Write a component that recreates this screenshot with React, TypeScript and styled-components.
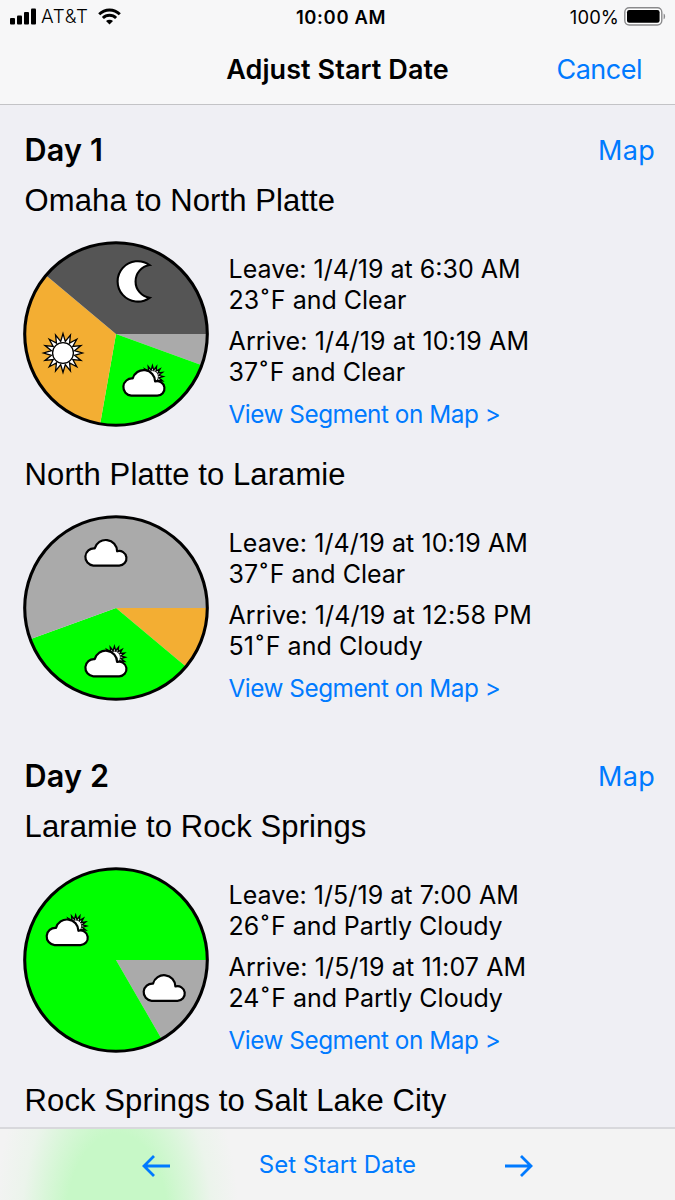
import React from "react";
import styled, { createGlobalStyle } from "styled-components";

const SANS = `Inter, "Liberation Sans", sans-serif`;
const BLUE = "#007aff";

const GlobalStyle = createGlobalStyle`
  *, *::before, *::after { box-sizing: border-box; }
  body { margin: 0; background: #efeff4; font-family: ${SANS}; color: #000; }
  h1, h2, h3, p { margin: 0; font-weight: 400; }
  button { font: inherit; border: 0; background: none; padding: 0; color: ${BLUE}; }
  svg { display: block; flex: none; }
`;

const Screen = styled.div`
  display: flex;
  flex-direction: column;
  width: 675px;
  height: 1200px;
  overflow: hidden;
  background: #efeff4;
`;

const Header = styled.header`
  flex: none;
  height: 105px;
  background: #f7f7f8;
  border-bottom: 1px solid #c3c3c6;
`;

const StatusBar = styled.div`
  display: grid;
  grid-template-columns: 1fr auto 1fr;
  align-items: center;
  height: 33px;
  padding: 0 9px 0 10px;
  font-size: 18.4px;
`;

const StatusGroup = styled.div<{ $end?: boolean }>`
  display: flex;
  align-items: center;
  justify-content: ${(p) => (p.$end ? "flex-end" : "flex-start")};
`;

const Carrier = styled.span`
  margin: 0 9px 0 5px;
  font-weight: 300;
  font-size: 18.8px;
  letter-spacing: 0.65px;
`;

const Clock = styled.span`
  font-weight: 600;
  letter-spacing: 0.65px;
  padding-left: 6px;
`;

const Charge = styled.span`
  margin-right: 5px;
  letter-spacing: 0.1px;
`;

const NavBar = styled.div`
  display: grid;
  grid-template-columns: 1fr auto 1fr;
  align-items: center;
  height: 72px;
  padding-right: 33px;
`;

const NavTitle = styled.h1`
  grid-column: 2;
  font-size: 27px;
  font-weight: 600;
  letter-spacing: 0.08px;
  padding-left: 33px;
`;

const NavAction = styled.button`
  justify-self: end;
  font-size: 27px;
  letter-spacing: -0.5px;
`;

const Itinerary = styled.main`
  flex: 1;
  min-height: 0;
  overflow: hidden;
  padding: 25px 20px 0 24.6px;
`;

const Day = styled.section`
  height: 626px;
`;

const DayHeader = styled.div`
  display: flex;
  align-items: center;
  justify-content: space-between;
  height: 39px;
  margin-bottom: 1px;
`;

const DayTitle = styled.h2`
  font-size: 30.6px;
  font-weight: 600;
  letter-spacing: 0.15px;
`;

const MapLink = styled.button`
  padding-top: 2px;
  font-size: 27px;
  letter-spacing: 0.3px;
`;

const Segment = styled.article`
  height: 274px;
`;

const Route = styled.h3`
  height: 60px;
  line-height: 62px;
  font-family: "Liberation Sans", Arial, sans-serif;
  font-size: 31px;
  letter-spacing: 0.1px;
`;

const SegmentBody = styled.div`
  display: flex;
  padding-top: 11px;
  margin-left: -1.9px;
`;

const Details = styled.div`
  display: flex;
  flex-direction: column;
  align-items: flex-start;
  padding: 13px 0 0 19.8px;
  font-size: 25px;
  line-height: 31px;
  white-space: nowrap;
`;

const Stop = styled.div`
  margin-bottom: 10px;
`;

const StopLine = styled.p<{ $track?: number }>`
  letter-spacing: ${(p) => p.$track ?? 0}px;
`;

const Degree = styled.span`
  margin: 0 2.2px 0 2px;
`;

const SegmentLink = styled.button`
  margin-top: 1px;
  font-size: 24.3px;
  line-height: 31px;
  letter-spacing: -0.46px;
`;

const Toolbar = styled.footer`
  flex: none;
  display: flex;
  align-items: center;
  height: 73px;
  padding: 3px 141px 0;
  justify-content: space-between;
  border-top: 2px solid #d8d8dc;
  background: radial-gradient(
      ellipse 122px 215px at 117px 95px,
      #c7f8c7 0%,
      #c7f8c7 42%,
      rgba(210, 247, 210, 0.8) 60%,
      rgba(228, 245, 228, 0.5) 78%,
      rgba(243, 243, 243, 0) 100%
    ),
    #f3f3f3;
`;

const ToolbarLabel = styled.button`
  margin-top: -4px;
  font-size: 24px;
`;

type WeatherKind = "clear" | "night" | "cloudy" | "partly";

const FILL: Record<WeatherKind, string> = {
  clear: "#f3ae33",
  night: "#555555",
  cloudy: "#aaaaaa",
  partly: "#00ff00",
};

interface Wedge {
  kind: WeatherKind;
  from: number;
  to: number;
  icon?: [number, number];
}

function star(cx: number, cy: number, rays: number, outer: number, inner: number) {
  const pts: string[] = [];
  for (let i = 0; i < rays * 2; i++) {
    const r = i % 2 ? inner : outer;
    const a = (Math.PI * i) / rays - Math.PI / 2;
    pts.push(`${(cx + r * Math.cos(a)).toFixed(2)},${(cy + r * Math.sin(a)).toFixed(2)}`);
  }
  return pts.join(" ");
}

const Sun = () => (
  <g fill="#fff" stroke="#000" strokeWidth="1.3">
    <polygon points={star(0, 0, 16, 19.4, 11.8)} strokeMiterlimit="8" />
    <circle r="10.4" />
  </g>
);

const Moon = () => (
  <path
    d="M13.2 -16.4A20.2 20.2 0 1 0 13.2 16.4A16.6 16.6 0 0 1 13.2 -16.4Z"
    fill="#fff"
    stroke="#000"
    strokeWidth="2.1"
    strokeMiterlimit="6"
  />
);

const Cloud = () => (
  <path
    d="M8.9 25.7A8.6 8.6 0 1 1 10.3 8.5A11.4 11.4 0 0 1 32.7 11.4A7.3 7.3 0 1 1 34.8 25.7Z"
    fill="#fff"
    stroke="#000"
    strokeWidth="2.2"
    strokeLinejoin="round"
  />
);

const PartlyCloudy = () => (
  <>
    <polygon
      points={star(30, 6.6, 16, 10.8, 6.6)}
      fill="#fff"
      stroke="#000"
      strokeWidth="1.4"
      strokeMiterlimit="6"
    />
    <circle cx="30" cy="6.6" r="6" fill="#fff" stroke="#000" strokeWidth="0.8" />
    <Cloud />
  </>
);

const ICON: Record<WeatherKind, React.FC> = {
  clear: Sun,
  night: Moon,
  cloudy: Cloud,
  partly: PartlyCloudy,
};

function wedgePath(from: number, to: number) {
  const p = (deg: number) => {
    const a = (deg * Math.PI) / 180;
    return `${(93 + 91.5 * Math.cos(a)).toFixed(2)} ${(93 + 91.5 * Math.sin(a)).toFixed(2)}`;
  };
  return `M93 93L${p(from)}A91.5 91.5 0 ${to - from > 180 ? 1 : 0} 1 ${p(to)}Z`;
}

function WeatherPie({ wedges }: { wedges: Wedge[] }) {
  return (
    <svg width="186" height="186" viewBox="0 0 186 186">
      {wedges.map((w) => (
        <path key={w.from} d={wedgePath(w.from, w.to)} fill={FILL[w.kind]} />
      ))}
      <circle cx="93" cy="93" r="91.3" fill="none" stroke="#000" strokeWidth="3.1" />
      {wedges.map((w) => {
        if (!w.icon) return null;
        const Icon = ICON[w.kind];
        return (
          <g key={w.from} transform={`translate(${w.icon[0]} ${w.icon[1]})`}>
            <Icon />
          </g>
        );
      })}
    </svg>
  );
}

interface Line {
  text: string;
  track?: number;
}

interface SegmentData {
  route: string;
  wedges: Wedge[];
  leave: Line[];
  arrive: Line[];
}

const DAYS: { title: string; segments: SegmentData[] }[] = [
  {
    title: "Day 1",
    segments: [
      {
        route: "Omaha to North Platte",
        wedges: [
          { kind: "cloudy", from: 0, to: 20 },
          { kind: "partly", from: 20, to: 100, icon: [99.4, 129] },
          { kind: "clear", from: 100, to: 220, icon: [40, 112] },
          { kind: "night", from: 220, to: 360, icon: [113.4, 40.4] },
        ],
        leave: [{ text: "Leave: 1/4/19 at 6:30 AM" }, { text: "23˚F and Clear" }],
        arrive: [{ text: "Arrive: 1/4/19 at 10:19 AM", track: 0.13 }, { text: "37˚F and Clear" }],
      },
      {
        route: "North Platte to Laramie",
        wedges: [
          { kind: "clear", from: 0, to: 40 },
          { kind: "partly", from: 40, to: 160, icon: [61.4, 135.6] },
          { kind: "cloudy", from: 160, to: 360, icon: [61.4, 24.9] },
        ],
        leave: [{ text: "Leave: 1/4/19 at 10:19 AM", track: 0.1 }, { text: "37˚F and Clear" }],
        arrive: [
          { text: "Arrive: 1/4/19 at 12:58 PM", track: 0.12 },
          { text: "51˚F and Cloudy", track: 0.06 },
        ],
      },
    ],
  },
  {
    title: "Day 2",
    segments: [
      {
        route: "Laramie to Rock Springs",
        wedges: [
          { kind: "cloudy", from: 0, to: 60, icon: [119.7, 108.1] },
          { kind: "partly", from: 60, to: 360, icon: [22.7, 52.4] },
        ],
        leave: [{ text: "Leave: 1/5/19 at 7:00 AM", track: 0.05 }, { text: "26˚F and Partly Cloudy" }],
        arrive: [{ text: "Arrive: 1/5/19 at 11:07 AM", track: 0.13 }, { text: "24˚F and Partly Cloudy" }],
      },
      { route: "Rock Springs to Salt Lake City", wedges: [], leave: [], arrive: [] },
    ],
  },
];

const SignalIcon = () => (
  <svg width="26" height="17" viewBox="0 0 26 17">
    <rect x="0" y="10" width="5" height="6.6" rx="1" />
    <rect x="7" y="7.4" width="5" height="9.2" rx="1" />
    <rect x="14" y="4" width="5" height="12.6" rx="1" />
    <rect x="21" y="0.5" width="5" height="16.1" rx="1" />
  </svg>
);

const WifiIcon = () => (
  <svg width="23" height="17" viewBox="0 0 23 17" fill="none" stroke="#000" strokeWidth="2.9">
    <path d="M1.2 6.3A14.6 14.6 0 0 1 21.8 6.3" />
    <path d="M4.9 10A9.3 9.3 0 0 1 18.1 10" />
    <path d="M11.5 16.6L8 13.1A5 5 0 0 1 15 13.1Z" fill="#000" stroke="none" />
  </svg>
);

const BatteryIcon = () => (
  <svg width="42" height="19" viewBox="0 0 42 19">
    <rect x="0.8" y="0.8" width="37" height="17.2" rx="4.4" fill="#fff" stroke="#8a8a8c" strokeWidth="1.4" />
    <rect x="3" y="3" width="32.6" height="12.8" rx="2.2" />
    <path d="M39.6 6.5C41.6 7.2 41.6 11.6 39.6 12.3Z" fill="#8a8a8c" />
  </svg>
);

const ArrowIcon = ({ flip }: { flip?: boolean }) => (
  <svg width="30" height="24" viewBox="0 0 30 24" fill="none" stroke={BLUE} strokeWidth="2.8">
    <path
      d="M29 12H3M13 2L3 12L13 22"
      transform={flip ? "translate(30 0) scale(-1 1)" : undefined}
    />
  </svg>
);

const StopText = ({ text }: { text: string }) => {
  const [before, after] = text.split("˚");
  if (after === undefined) return <>{before}</>;
  return (
    <>
      {before}
      <Degree>˚</Degree>
      {after}
    </>
  );
};

const StopBlock = ({ lines }: { lines: Line[] }) => (
  <Stop>
    {lines.map((l) => (
      <StopLine key={l.text} $track={l.track}>
        <StopText text={l.text} />
      </StopLine>
    ))}
  </Stop>
);

export default function App() {
  return (
    <Screen>
      <GlobalStyle />
      <Header>
        <StatusBar>
          <StatusGroup>
            <SignalIcon />
            <Carrier>AT&amp;T</Carrier>
            <WifiIcon />
          </StatusGroup>
          <Clock>10:00 AM</Clock>
          <StatusGroup $end>
            <Charge>100%</Charge>
            <BatteryIcon />
          </StatusGroup>
        </StatusBar>
        <NavBar>
          <NavTitle>Adjust Start Date</NavTitle>
          <NavAction>Cancel</NavAction>
        </NavBar>
      </Header>
      <Itinerary>
        {DAYS.map((day) => (
          <Day key={day.title}>
            <DayHeader>
              <DayTitle>{day.title}</DayTitle>
              <MapLink>Map</MapLink>
            </DayHeader>
            {day.segments.map((s) => (
              <Segment key={s.route}>
                <Route>{s.route}</Route>
                {s.wedges.length > 0 && (
                  <SegmentBody>
                    <WeatherPie wedges={s.wedges} />
                    <Details>
                      <StopBlock lines={s.leave} />
                      <StopBlock lines={s.arrive} />
                      <SegmentLink>View Segment on Map &gt;</SegmentLink>
                    </Details>
                  </SegmentBody>
                )}
              </Segment>
            ))}
          </Day>
        ))}
      </Itinerary>
      <Toolbar>
        <ArrowIcon />
        <ToolbarLabel>Set Start Date</ToolbarLabel>
        <ArrowIcon flip />
      </Toolbar>
    </Screen>
  );
}
